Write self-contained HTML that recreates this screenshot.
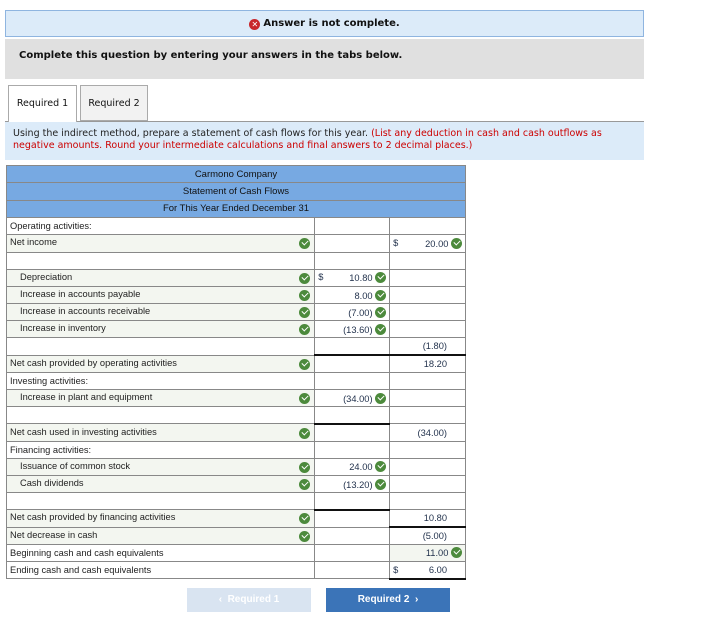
<!DOCTYPE html>
<html><head><meta charset="utf-8"><style>
body{margin:0;background:#fff;width:723px;height:619px;position:relative;overflow:hidden;font-family:"Liberation Sans",Arial,sans-serif}
.v{font-family:"DejaVu Sans",Verdana,sans-serif}
#ans{position:absolute;left:5px;top:10px;width:637px;height:25px;background:#dcebf9;border:1px solid #8fb5e0;text-align:center;font-size:10px;font-weight:bold;line-height:25px;color:#111}
#x{display:inline-block;width:11px;height:11px;border-radius:50%;background:#c8262b;color:#fff;font-size:8px;line-height:11px;vertical-align:-1px;margin-right:3px}
#cq{position:absolute;left:5px;top:39px;width:639px;height:40px;background:#e0e0e0;font-size:10px;font-weight:bold;line-height:34px;padding-left:14px;box-sizing:border-box;color:#111}
.tab{position:absolute;top:85px;height:36px;box-sizing:border-box;border:1px solid #aaa;font-size:9.5px;line-height:36px;text-align:center;color:#111}
#tl{position:absolute;left:5px;top:121px;width:639px;border-top:1px solid #999}
#ins{position:absolute;left:5px;top:122px;width:639px;height:38px;background:#dcebf9;font-size:9.5px;line-height:12px;padding:6px 8px;box-sizing:border-box;color:#222}
#ins span{color:#c00}
table{position:absolute;left:6px;top:165px;border-collapse:collapse;width:460px;font-size:9.3px;color:#222}
td{border:1px solid #888;height:17.2px;padding:0 3px;white-space:nowrap;box-sizing:border-box}
col.a{width:309px}col.b{width:75px}col.c{width:76px}
.h td{background:#77a9e2;text-align:center;font-size:9.5px;color:#111;border-color:#888}
.h td{height:17.4px}
.g{background:#f3f6f0}
.i{padding-left:13px}
.r{text-align:right}
.ck{display:inline-block;width:11px;height:11px;border-radius:50%;background:#4c8a3c;vertical-align:-2px;position:relative}
.ck:after{content:"";position:absolute;left:3px;top:2px;width:5px;height:3px;border-left:1.6px solid #fff;border-bottom:1.6px solid #fff;transform:rotate(-45deg)}
.lc{float:right;margin-right:1px;margin-top:1px}
.n{color:#1f2f4a}
.tk{border-top:2px solid #111}
.bk{border-bottom:2px solid #111}
.d{float:left}
.btn{position:absolute;top:588px;width:124px;height:24px;font-size:10px;font-weight:bold;text-align:center;line-height:24px;color:#fff}
</style></head><body>
<div id="ans" class="v"><span id="x">✕</span>Answer is not complete.</div>
<div id="cq" class="v">Complete this question by entering your answers in the tabs below.</div>
<div class="tab v" style="left:8px;width:69px;background:#fff;border-bottom:none;height:37px;z-index:2">Required 1</div>
<div class="tab v" style="left:80px;width:68px;background:#f2f2f2">Required 2</div>
<div id="tl"></div>
<div id="ins" class="v">Using the indirect method, prepare a statement of cash flows for this year. <span>(List any deduction in cash and cash outflows as negative amounts. Round your intermediate calculations and final answers to 2 decimal places.)</span></div>
<table>
<colgroup><col class="a"><col class="b"><col class="c"></colgroup>
<tr class="h"><td colspan="3">Carmono Company</td></tr>
<tr class="h"><td colspan="3">Statement of Cash Flows</td></tr>
<tr class="h"><td colspan="3">For This Year Ended December 31</td></tr>
<tr><td>Operating activities:</td><td></td><td></td></tr>
<tr><td class="g">Net income<span class="ck lc"></span></td><td></td><td class="r n"><span class="d">$</span>20.00 <span class="ck"></span></td></tr>
<tr><td></td><td></td><td></td></tr>
<tr><td class="g i">Depreciation<span class="ck lc"></span></td><td class="r n"><span class="d">$</span>10.80 <span class="ck"></span></td><td></td></tr>
<tr><td class="g i">Increase in accounts payable<span class="ck lc"></span></td><td class="r n">8.00 <span class="ck"></span></td><td></td></tr>
<tr><td class="g i">Increase in accounts receivable<span class="ck lc"></span></td><td class="r n">(7.00) <span class="ck"></span></td><td></td></tr>
<tr><td class="g i">Increase in inventory<span class="ck lc"></span></td><td class="r n">(13.60) <span class="ck"></span></td><td></td></tr>
<tr><td></td><td></td><td class="r n" style="padding-right:18px">(1.80)</td></tr>
<tr><td class="g">Net cash provided by operating activities<span class="ck lc"></span></td><td class="tk"></td><td class="r n tk" style="padding-right:18px">18.20</td></tr>
<tr><td>Investing activities:</td><td></td><td></td></tr>
<tr><td class="g i">Increase in plant and equipment<span class="ck lc"></span></td><td class="r n">(34.00) <span class="ck"></span></td><td></td></tr>
<tr><td></td><td></td><td></td></tr>
<tr><td class="g">Net cash used in investing activities<span class="ck lc"></span></td><td class="tk"></td><td class="r n" style="padding-right:18px">(34.00)</td></tr>
<tr><td>Financing activities:</td><td></td><td></td></tr>
<tr><td class="g i">Issuance of common stock<span class="ck lc"></span></td><td class="r n">24.00 <span class="ck"></span></td><td></td></tr>
<tr><td class="g i">Cash dividends<span class="ck lc"></span></td><td class="r n">(13.20) <span class="ck"></span></td><td></td></tr>
<tr><td></td><td></td><td></td></tr>
<tr><td class="g">Net cash provided by financing activities<span class="ck lc"></span></td><td class="tk"></td><td class="r n bk" style="padding-right:18px">10.80</td></tr>
<tr><td class="g">Net decrease in cash<span class="ck lc"></span></td><td></td><td class="r n" style="padding-right:18px">(5.00)</td></tr>
<tr><td>Beginning cash and cash equivalents</td><td></td><td class="r n g">11.00 <span class="ck"></span></td></tr>
<tr><td>Ending cash and cash equivalents</td><td></td><td class="r n bk" style="padding-right:18px"><span class="d">$</span>6.00</td></tr>
</table>
<div class="btn" style="left:187px;background:#d9e4f1;color:#fff">&lsaquo;&nbsp; Required 1</div>
<div class="btn" style="left:326px;background:#3b74b8">Required 2 &nbsp;&rsaquo;</div>
</body></html>
